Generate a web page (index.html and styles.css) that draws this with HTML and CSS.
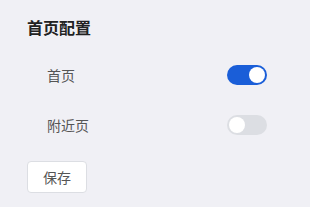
FILE: index.html
```html
<!DOCTYPE html>
<html lang="zh">
<head>
	<meta charset="UTF-8">
	<title>首页配置</title>
	<link rel="stylesheet" href="styles.css">
</head>
<body>
	<div class="panel">
		<div class="title">首页配置</div>
		<ul class="list">
			<li class="row">
				<span class="label">首页</span>
				<button class="switch on"><span class="knob"></span></button>
			</li>
			<li class="row">
				<span class="label">附近页</span>
				<button class="switch"><span class="knob"></span></button>
			</li>
		</ul>
		<button class="save">保存</button>
	</div>
</body>
</html>
```

FILE: styles.css
```css
body {
	margin: 0;
	background: #f0f0f5;
	font-family: "Noto Sans CJK SC", "Noto Sans", sans-serif;
}
.panel {
	padding: 16px 43px 0 27px;
}
.title {
	font-size: 16px;
	line-height: 22px;
	font-weight: bold;
	color: #222;
}
.list {
	margin: 12px 0 0;
	padding: 0;
	list-style: none;
}
.row {
	height: 50px;
	display: flex;
	justify-content: space-between;
	align-items: center;
	padding-left: 20px;
}
.label {
	font-size: 14px;
	color: #555;
}
.switch {
	width: 40px;
	height: 20px;
	padding: 2px;
	border: none;
	border-radius: 10px;
	background: #dcdee3;
	display: flex;
	justify-content: flex-start;
}
.switch.on {
	background: #1a5ed8;
	justify-content: flex-end;
}
.knob {
	width: 16px;
	height: 16px;
	border-radius: 50%;
	background: #fff;
}
.save {
	margin-top: 11px;
	width: 60px;
	height: 32px;
	background: #fff;
	border: 1px solid #dcdee3;
	border-radius: 4px;
	font-family: inherit;
	font-size: 14px;
	color: #555;
}
```
